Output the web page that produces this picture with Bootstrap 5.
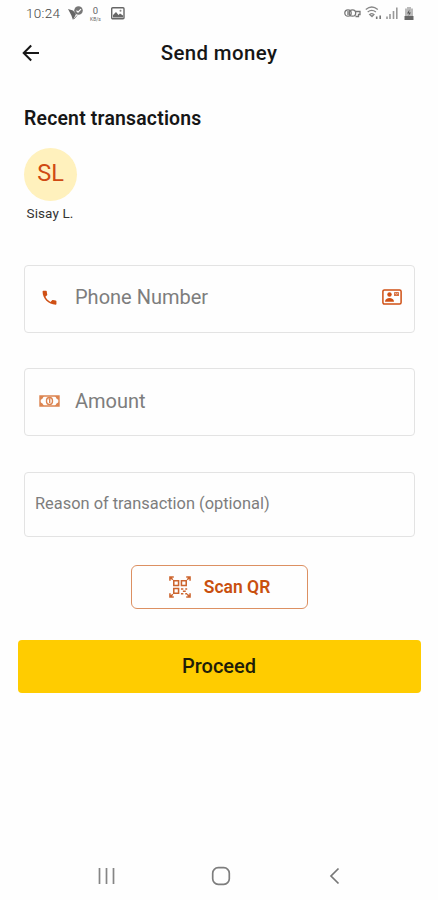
<!DOCTYPE html>
<html lang="en">
<head>
<meta charset="utf-8">
<meta name="viewport" content="width=device-width, initial-scale=1">
<title>Send money</title>
<link href="https://cdn.jsdelivr.net/npm/bootstrap@5.3.0/dist/css/bootstrap.min.css" rel="stylesheet">
<style>
body{font-family:Roboto,"Liberation Sans",sans-serif;background:#fefefe;color:#161616}
svg{display:block;flex:none}
.screen{height:900px;overflow:hidden}
.status-bar{height:26px;padding:0 24px 0 26px;color:#777;font-size:13.5px}
.status-time{width:42px;letter-spacing:.3px;font-weight:300;color:#444}
.rate{width:15px;line-height:11px;font-size:9.5px;color:#666}
.rate-unit{font-size:5px;line-height:6px}
.battery{margin-left:6px}
.app-bar{height:53px;display:grid;grid-template-columns:1fr auto 1fr;padding:0 22px}
.app-title{font-size:20.4px;font-weight:500;letter-spacing:.4px;line-height:24px}
.content{padding:28px 23px 0 24px}
.section-title{font-size:19.4px;font-weight:600;line-height:24px;letter-spacing:.2px}
.contact{width:53px;margin-top:17px}
.avatar{width:53px;height:53px;background:#fff1bd;color:#cf4a13;font-size:23.5px;padding-bottom:1px}
.contact-name{font-size:13.5px;line-height:16px;margin-top:4px;color:#333;white-space:nowrap;letter-spacing:.1px;margin-left:-1px}
.field{height:68px;border:1.5px solid #e3e3e3;border-radius:4px;color:#7d7d7d;font-size:20px;background:#fefefe;padding:0 12px 3px 14px}
.field-phone{padding-bottom:5px}
.field-label{margin-left:15px}
.form-stack{margin-top:44px;gap:35px}
.field-note{height:65px;font-size:16.4px;padding:0 10px 1px;margin-top:1px}
.scan-btn{width:177px;height:44px;margin:28px 0 0 107px;border:1.5px solid #dc9062;border-radius:6px;color:#c9500f;font-size:17.5px;font-weight:600;padding:0;gap:13px}
.proceed-btn{width:403px;height:53px;margin:31px 0 0 18px;border:0;border-radius:4px;background:#fc0;color:#211d08;font-size:20px;font-weight:500;padding:0 1px 1px 0}
.nav-keys{padding:0 98px 14px 98px;color:#777}
.home-key{margin-right:3px}
.brand{color:#cf5015}
</style>
</head>
<body>
<main class="screen d-flex flex-column">
  <div class="status-bar d-flex align-items-center justify-content-between">
    <div class="d-flex align-items-center">
      <span class="status-time">10:24</span>
      <svg width="16" height="15" viewBox="0 0 16 15"><path d="M0 3l5 1.500L8 8l-3 6-1.600-4.500z" fill="#666"/><circle cx="10.500" cy="4.500" r="4.300" fill="#777"/><path d="M8.500 4.700l1.500 1.500 3-3" fill="none" stroke="#fff" stroke-width="1.200"/><path d="M6 13l3-3.500" stroke="#888"/></svg>
      <div class="rate ms-1 d-flex flex-column align-items-center"><span>0</span><span class="rate-unit">KB/s</span></div>
      <svg width="14" height="13" class="ms-2" viewBox="0 0 14 13"><rect x=".7" y=".7" width="12.300" height="11" rx="1" fill="none" stroke="#666" stroke-width="1.400"/><path d="M2 10.500V8l3-3 2.500 3L9 6.500l3 2v2z" fill="#666"/><circle cx="9.500" cy="3.700" r="1" fill="#888"/></svg>
    </div>
    <div class="d-flex align-items-center">
      <svg width="17" height="12" viewBox="0 0 17 12" fill="none" stroke="#777" stroke-width="1.300"><circle cx="4" cy="6" r="3.200"/><path d="M4 4v4"/><circle cx="8.500" cy="6" r="3.200"/><path d="M11.500 4.500H16v3h-1.500v2h-3"/></svg>
      <svg class="ms-1" width="17" height="14" viewBox="0 0 17 14" fill="none" stroke="#888" stroke-width="1.300"><path d="M.8 3.500q6-5 12 0M2.700 6q4-3.300 8.200 0M4.700 8.500q2-1.700 4.200 0L7 10.500z"/><path d="M11.700 13v-2.500m3.500-1V13" stroke="#777" stroke-width="1.600"/></svg>
      <svg class="ms-1" width="12" height="13" viewBox="0 0 12 13" stroke="#999" stroke-width="1.600"><path d="M1 12V9.500M4 12V7M7.500 12V4M10.800 12V.5"/></svg>
      <svg class="battery" width="10" height="13" viewBox="0 0 10 13"><path d="M3 0h4v1.500h2V13H1V1.500h2z" fill="#bbb"/><path d="M.5 9h9v4h-9z" fill="#666"/><path d="M5.500 2.500L3 6.500h2L4.500 9 7 5.500H5z" fill="#555"/></svg>
    </div>
  </div>

  <header class="app-bar align-items-center">
    <svg width="18" height="18" viewBox="0 0 18 18" fill="none" stroke="#171717" stroke-width="2"><path d="M17 9H2M9.200 1.500L1.700 9l7.500 7.500"/></svg>
    <h1 class="app-title m-0">Send money</h1>
  </header>

  <section class="content">
    <h2 class="section-title m-0">Recent transactions</h2>
    <div class="contact d-flex flex-column align-items-center">
      <div class="avatar rounded-circle d-flex align-items-center justify-content-center">SL</div>
      <div class="contact-name">Sisay L.</div>
    </div>

    <div class="form-stack d-flex flex-column">
      <div class="field field-phone d-flex align-items-center">
        <svg class="brand" width="21" height="20" viewBox="-1 -2 26 26"><path fill="currentColor" d="M6.620 10.790c1.440 2.830 3.760 5.140 6.590 6.590l2.200-2.200c.27-.27.67-.36 1.020-.24 1.120.37 2.330.57 3.570.57.550 0 1 .45 1 1V20c0 .55-.45 1-1 1-9.390 0-17-7.610-17-17 0-.55.450-1 1-1h3.500c.55 0 1 .45 1 1 0 1.250.2 2.450.57 3.570.11.350.03.740-.25 1.020z"/></svg>
        <span class="field-label">Phone Number</span>
        <svg class="ms-auto brand" width="20" height="16" viewBox="0 0 20 16"><rect x=".9" y=".9" width="18.200" height="14.200" rx="1.500" fill="none" stroke="currentColor" stroke-width="1.500"/><circle cx="7.500" cy="5.500" r="2.200" fill="currentColor"/><path d="M3 12.800c0-5 9-5 9 0z" fill="currentColor"/><path d="M12 3h5v4h-5z" fill="currentColor" opacity=".8"/><path d="M12.500 3.700l2 1.500 2-1.500" fill="none" stroke="#fff" stroke-width=".5"/></svg>
      </div>
      <div class="field d-flex align-items-center">
        <svg width="21" height="12" viewBox="0 0 21 12" fill="none" stroke="#dc8450" stroke-width="1.400"><path d="M1 1h19v10H1z"/><path d="M1 1h4Q4 4 1 5zM1 11h4Q4 8 1 7zM20 1h-4q1 3 4 4zM20 11h-4q1-3 4-4z" fill="#dc8450" stroke="none"/><ellipse cx="10.500" cy="6" rx="3" ry="3.500"/><path d="M9.700 4.500l1-.5v4"/></svg>
        <span class="field-label">Amount</span>
      </div>
      <div class="field field-note d-flex align-items-center">Reason of transaction (optional)</div>
    </div>

    <button type="button" class="scan-btn btn d-flex align-items-center justify-content-center">
      <svg width="22" height="22" viewBox="0 0 23 23" fill="none" stroke="#cc642d" stroke-width="1.600"><path d="M1 5V1h4M18 1h4v4M22 18v4h-4M5 22H1v-4M1 1l3 3M22 1l-3 3M1 22l3-3M22 22l-3-3"/><path d="M5 5h5v5H5zM13 5h5v5h-5zM5 13h5v5H5z"/><path d="M12.500 13.500h2.500m2 0h2M14.500 16h3M12.500 18.500h2.500m2 0h2"/></svg>
      <span>Scan QR</span>
    </button>
  </section>
  <button type="button" class="proceed-btn btn">Proceed</button>

  <nav class="nav-keys mt-auto d-flex align-items-center justify-content-between" aria-label="System">
    <svg width="17" height="20" viewBox="0 0 17 20" stroke="#858585" stroke-width="1.700"><path d="M1.500 2v16M8.500 2v16M15.500 2v16"/></svg>
    <svg class="home-key" width="20" height="20" viewBox="0 0 20 20" fill="none" stroke="#7d7d7d" stroke-width="1.700"><rect x="1.700" y="1.700" width="16.600" height="16.600" rx="5.500"/></svg>
    <svg width="11" height="20" viewBox="0 0 11 20" fill="none" stroke="#777" stroke-width="1.700"><path d="M9.500 2.500L2 10l7.500 7.500"/></svg>
  </nav>
</main>
<script src="https://cdn.jsdelivr.net/npm/bootstrap@5.3.0/dist/js/bootstrap.bundle.min.js"></script>
</body>
</html>
